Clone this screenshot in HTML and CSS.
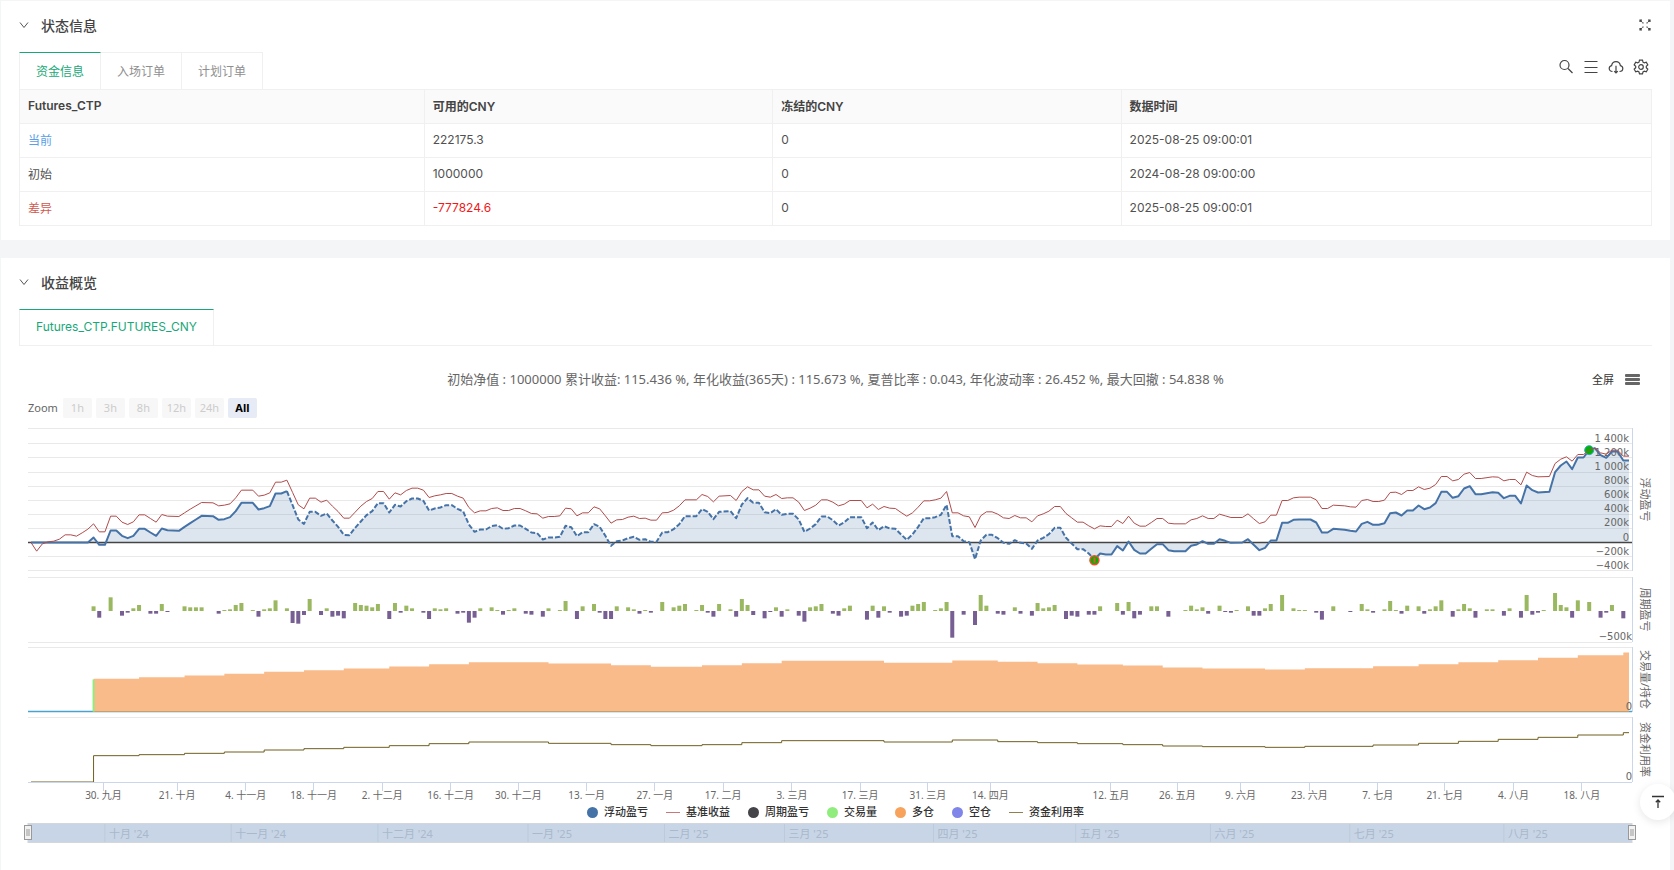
FILE: index.html
```html
<!DOCTYPE html>
<html lang="zh-CN">
<head>
    <meta charset="UTF-8">
    <meta name="viewport" content="width=device-width, initial-scale=1.0">
    <title>回测结果</title>
    <link rel="stylesheet" href="styles.css">
</head>
<body>
    <section class="panel">
        <header class="panel-header">
            <svg class="chevron" viewBox="0 0 10 10"><path d="M1 2.5 5 7.5 9 2.5"/></svg>
            <h2>状态信息</h2>
            <button class="icon-button expand" aria-label="展开">
                <svg viewBox="0 0 12 12"><path d="M1 3V1h2M1 1l1.800 1.800M3.400 3.400l1 1M9 1h2v2M11 1 9.200 2.800M8.600 3.400l-1 1M1 9v2h2M1 11l1.800-1.800M3.400 8.600l1-1M11 9v2H9M11 11 9.200 9.200M8.600 8.600l-1-1"/></svg>
            </button>
        </header>

        <div class="tab-bar">
            <button class="tab active">资金信息</button>
            <button class="tab">入场订单</button>
            <button class="tab">计划订单</button>
            <div class="tools">
                <button class="icon-button" aria-label="搜索">
                    <svg viewBox="0 0 16 16"><circle cx="6.500" cy="6" r="4.500"/><path d="M10 9.500l4.500 4.500"/></svg>
                </button>
                <button class="icon-button" aria-label="列表">
                    <svg viewBox="0 0 16 16"><path d="M1.500 2.500h13M1.500 8.500h13M1.500 13.500h13"/></svg>
                </button>
                <button class="icon-button" aria-label="下载">
                    <svg viewBox="0 0 16 16"><path d="M4.500 12.500C2.500 12.500 1.200 11.200 1.200 9.600c0-1.500 1-2.600 2.400-2.900C4 4.200 5.700 2.700 8 2.700s4 1.500 4.400 4c1.400.3 2.400 1.400 2.400 2.900 0 1.600-1.300 2.900-3.300 2.900M8 6.800v7M6.200 12.200 8 14l1.800-1.800"/></svg>
                </button>
                <button class="icon-button" aria-label="设置">
                    <svg viewBox="0 0 16 16"><path d="M6.500 1.200h3l.5 2 1.300.7 2-.6 1.500 2.600-1.500 1.400v1.500l1.500 1.400-1.500 2.600-2-.6-1.300.7-.5 2h-3l-.5-2-1.300-.7-2 .6-1.500-2.600 1.500-1.400V7.300L1.200 5.900l1.500-2.600 2 .6L6 3.200z"/><circle cx="8" cy="8" r="2.300"/></svg>
                </button>
            </div>
        </div>

        <table class="funds">
            <colgroup><col class="col-name"><col class="col-money"><col class="col-money"><col></colgroup>
            <thead>
                <tr><th>Futures_CTP</th><th>可用的CNY</th><th>冻结的CNY</th><th>数据时间</th></tr>
            </thead>
            <tbody>
                <tr><td class="blue">当前</td><td>222175.3</td><td>0</td><td>2025-08-25 09:00:01</td></tr>
                <tr><td>初始</td><td>1000000</td><td>0</td><td>2024-08-28 09:00:00</td></tr>
                <tr><td class="brick">差异</td><td class="red">-777824.6</td><td>0</td><td>2025-08-25 09:00:01</td></tr>
            </tbody>
        </table>
    </section>

    <section class="panel panel-chart">
        <header class="panel-header">
            <svg class="chevron" viewBox="0 0 10 10"><path d="M1 2.500 5 7.500 9 2.500"/></svg>
            <h2>收益概览</h2>
        </header>

        <div class="tab-bar lined">
            <button class="tab active">Futures_CTP.FUTURES_CNY</button>
        </div>

        <div class="chart">
            <div class="chart-head">
                <p class="chart-title">初始净值 : 1000000 累计收益: 115.436 %, 年化收益(365天) : 115.673 %, 夏普比率 : 0.043, 年化波动率 : 26.452 %, 最大回撤 : 54.838 %</p>
                <div class="chart-actions">
                    <button class="fullscreen">全屏</button>
                    <button class="burger" aria-label="菜单"><i></i><i></i><i></i></button>
                </div>
            </div>

            <div class="range">
                <span>Zoom</span>
                <button disabled>1h</button>
                <button disabled>3h</button>
                <button disabled>8h</button>
                <button disabled>12h</button>
                <button disabled>24h</button>
                <button class="current">All</button>
            </div>

            <svg id="plots" class="plots"></svg>

            <div class="legend">
                <button><i class="dot dot-blue"></i>浮动盈亏</button>
                <button><i class="dash dash-red"></i>基准收益</button>
                <button><i class="dot dot-dark"></i>周期盈亏</button>
                <button><i class="dot dot-green"></i>交易量</button>
                <button><i class="dot dot-orange"></i>多仓</button>
                <button><i class="dot dot-violet"></i>空仓</button>
                <button><i class="dash dash-olive"></i>资金利用率</button>
            </div>

            <svg id="navigator" class="navigator"></svg>
        </div>
    </section>

    <button class="to-top" aria-label="回到顶部">
        <svg viewBox="0 0 14 14"><path d="M1 1.500h12M7 13V5M4.800 7.200 7 5l2.200 2.200"/></svg>
    </button>

    <script src="chart.js"></script>
</body>
</html>
```

FILE: styles.css
```css
* {
    box-sizing: border-box;
}

body {
    margin: 0;
    padding: 1px 4px 0 1px;
    min-height: 100vh;
    display: flex;
    flex-direction: column;
    background-color: #f4f5f7;
    color: #515151;
    font-family: Inter, "Noto Sans CJK SC", sans-serif;
    font-size: 12px;
}

button {
    margin: 0;
    padding: 0;
    border: none;
    background: none;
    color: inherit;
    font: inherit;
    cursor: pointer;
}

svg {
    display: block;
}

.panel {
    padding: 0 18px 14px;
    background-color: #fff;
}

.panel-chart {
    flex: 1;
    margin-top: 18px;
}

.panel-header {
    height: 51px;
    padding-bottom: 3px;
    display: flex;
    align-items: center;
}

.panel-header h2 {
    margin: 0;
    font-size: 14px;
    font-weight: 500;
    color: #444;
}

.chevron {
    width: 10px;
    height: 10px;
    margin-right: 12px;
    fill: none;
    stroke: #555;
}

.icon-button svg {
    width: 16px;
    height: 16px;
    fill: none;
    stroke: #444;
    stroke-width: 1.200;
}

.expand {
    margin-left: auto;
    margin-right: 1px;
}

.expand svg {
    width: 12px;
    height: 12px;
}

/* tabs */
.tab-bar {
    height: 37px;
    display: flex;
}

.tab-bar.lined {
    border-bottom: 1px solid #f0f0f0;
}

.tab {
    padding: 0 16px 2px;
    border-top: 1px solid #f0f0f0;
    border-right: 1px solid #f0f0f0;
    color: #8f8f8f;
}

.tab:first-child {
    border-left: 1px solid #f0f0f0;
}

.tab.active {
    border-top-color: #18a878;
    color: #18a878;
}

.tools {
    margin-left: auto;
    padding: 0 3px 7px 0;
    display: flex;
    align-items: center;
    gap: 9px;
}

/* funds table */
.funds {
    width: 100%;
    border-collapse: collapse;
    table-layout: fixed;
}

.col-name {
    width: 24.800%;
}

.col-money {
    width: 21.350%;
}

.funds th,
.funds td {
    height: 34px;
    padding: 0 8px 2px;
    border: 1px solid #f0f0f0;
    text-align: left;
}

.funds th {
    background-color: #fafafa;
    font-weight: 600;
    color: #444;
}

.funds .blue {
    color: #5a9fe8;
}

.funds .brick {
    color: #d0574e;
}

.funds .red {
    color: #f01818;
}

/* chart */
.chart {
    padding-top: 24px;
    font-family: "Noto Sans", "Noto Sans CJK SC", sans-serif;
    color: #666;
}

.chart-head {
    height: 18px;
    padding: 0 12px;
    display: grid;
    grid-template-columns: 1fr auto 1fr;
    align-items: center;
}

.chart-title {
    grid-column: 2;
    margin: 0;
    font-size: 13px;
    line-height: 18px;
    white-space: nowrap;
}

.chart-actions {
    display: flex;
    justify-content: flex-end;
    align-items: center;
    gap: 11px;
}

.fullscreen {
    font-size: 11px;
    color: #333;
}

.burger {
    width: 15px;
    display: grid;
    gap: 1px;
}

.burger i {
    height: 3px;
    border-radius: 1px;
    background-color: #666;
}

.range {
    height: 20px;
    margin: 10px 0 6px;
    padding-left: 9px;
    display: flex;
    gap: 4px;
    font-size: 11px;
    line-height: 20px;
}

.range span {
    margin-right: 1px;
}

.range button {
    width: 29px;
    border-radius: 2px;
    background-color: #f7f7f7;
    color: #ccc;
}

.range .current {
    background-color: #e6ebf5;
    color: #000;
    font-weight: 700;
}

.plots {
    width: 100%;
    height: 380px;
    overflow: visible;
    font-size: 10px;
}

.plots text {
    fill: #666;
}

.axis-value {
    font-family: "DejaVu Sans", sans-serif;
    text-anchor: end;
}

.plots .pane-title {
    font-size: 11px;
}

.pane-title,
.axis-date {
    text-anchor: middle;
}

.grid {
    stroke: #e9e9e9;
    shape-rendering: crispEdges;
}

.axis {
    stroke: #ccd6eb;
    shape-rendering: crispEdges;
}

.zero {
    stroke: #444;
    stroke-width: 1.500;
}

.area {
    fill: #4572a7;
    fill-opacity: .18;
}

.line-profit {
    fill: none;
    stroke: #4572a7;
    stroke-width: 2;
    stroke-linejoin: round;
}

.line-profit.dashed {
    stroke-dasharray: 5 2;
}

.line-base {
    fill: none;
    stroke: #b04c4c;
    stroke-width: 1;
}

.gain {
    fill: #9ab860;
}

.loss {
    fill: #775e93;
}

.volume {
    fill: #90ed7d;
}

.position {
    fill: #f9bb89;
}

.position-base {
    stroke: #c4a06e;
}

.flat {
    stroke: #4aa3cf;
    stroke-width: 1.500;
}

.line-usage {
    fill: none;
    stroke: #6f5f20;
}

.mark-low {
    fill: #00b400;
    stroke: #f05030;
    stroke-width: 1.500;
}

.mark-high {
    fill: #00b400;
    stroke: #3aa0c8;
}

.mark-bar {
    stroke: #f05030;
    stroke-width: 2;
}

.legend {
    height: 16px;
    display: flex;
    justify-content: center;
    gap: 18px;
    color: #333;
    font-size: 11px;
    font-weight: 500;
    line-height: 16px;
}

.legend button {
    display: flex;
    align-items: center;
    gap: 6px;
}

.dot {
    width: 11px;
    height: 11px;
    border-radius: 50%;
}

.dash {
    width: 14px;
    height: 1px;
}

.dot-blue { background-color: #4572a7; }
.dot-dark { background-color: #434348; }
.dot-green { background-color: #90ed7d; }
.dot-orange { background-color: #f7a35c; }
.dot-violet { background-color: #8085e9; }
.dash-red { background-color: #c87878; }
.dash-olive { background-color: #908050; }

.navigator {
    width: 100%;
    height: 20px;
    margin-top: 3px;
    overflow: visible;
    font-size: 11px;
}

.navigator text {
    fill: #a9b8ca;
}

.nav-mask {
    fill: #c8d5e6;
    stroke: #d3d6da;
}

.nav-line {
    stroke: #bccadb;
}

.handle {
    fill: #f2f2f2;
    stroke: #999;
}

.to-top {
    position: fixed;
    right: -2px;
    bottom: 50px;
    width: 36px;
    height: 36px;
    display: grid;
    place-items: center;
    border-radius: 50%;
    background-color: #fff;
    box-shadow: 0 2px 8px rgba(0, 0, 0, .1);
}

.to-top svg {
    width: 14px;
    height: 14px;
    fill: none;
    stroke: #333;
    stroke-width: 1.300;
}
```

FILE: chart.js
```js
// [day, floating profit, benchmark], one unit = 4.74k CNY
const profit = [
    [0,0,0],[1,0,-26],[2,0,-4],[3,0,2],[4,0,4],[5,0,10],[6,0,23],[7,0,23],[8,0,19],[9,0,29],
    [10,0,40],[11,15,56],[12,-7,32],[13,-7,32],[14,36,79],[15,36,79],[16,20,61],[17,13,54],[18,20,62],[19,41,83],
    [20,41,83],[21,30,72],[22,20,61],[23,42,84],[24,37,79],[26,35,78],[27,47,89],[28,58,100],[29,69,110],[30,80,120],
    [32,79,119],[33,68,110],[34,70,112],[35,76,116],[36,94,134],[37,119,157],[39,119,157],[40,99,139],[41,103,142],[42,109,149],
    [43,147,181],[44,147,181],[45,154,187],[46,112,150],[47,69,113],[48,56,101],[49,92,133],[50,92,133],[51,80,121],[52,87,127],
    [53,66,109],[54,47,93],[55,23,73],[56,22,73],[57,44,91],[58,63,109],[59,82,123],[60,94,132],[61,118,153],[62,118,153],
    [63,90,130],[64,113,149],[65,108,143],[66,124,156],[67,132,163],[68,132,163],[69,125,157],[70,96,135],[71,102,140],[72,105,143],
    [73,112,147],[74,112,147],[75,101,139],[76,93,133],[77,54,105],[78,32,89],[79,39,95],[80,39,95],[81,49,102],[82,52,104],
    [83,41,96],[84,43,96],[85,51,102],[86,51,102],[87,41,95],[88,30,87],[89,28,86],[90,9,73],[91,15,78],[92,15,78],
    [93,17,80],[94,50,103],[95,46,101],[96,19,80],[97,31,89],[98,31,89],[99,55,107],[100,47,101],[101,20,80],[102,-10,58],
    [103,4,68],[104,6,69],[105,13,76],[106,17,79],[107,8,72],[108,10,73],[109,2,67],[110,2,67],[111,30,89],[112,31,90],
    [113,40,97],[114,55,110],[115,79,128],[117,79,128],[118,100,144],[119,92,138],[120,70,122],[121,92,139],[123,94,141],[124,73,126],
    [125,114,153],[126,133,167],[127,119,158],[128,119,158],[129,91,139],[130,88,136],[131,100,144],[132,83,132],[133,86,134],[134,86,134],
    [135,69,121],[136,32,96],[137,42,103],[138,55,112],[139,78,128],[140,78,128],[141,67,121],[142,51,110],[143,60,115],[144,76,126],
    [146,76,126],[147,43,104],[148,60,115],[149,37,99],[150,49,108],[151,42,103],[152,41,102],[153,24,90],[154,8,79],[155,24,89],
    [156,47,106],[157,73,125],[158,73,125],[159,76,128],[160,83,133],[161,113,153],[162,19,89],[163,19,89],[164,4,80],[165,1,77],
    [166,-50,45],[167,6,80],[168,23,92],[169,23,92],[170,13,85],[171,-1,74],[172,-4,72],[173,7,81],[174,-1,74],[175,-3,74],
    [176,-19,62],[177,6,80],[178,14,86],[179,25,94],[180,44,108],[181,44,108],[182,14,87],[183,-3,74],[184,-20,61],[185,-20,61],
    [186,-33,50],[187,-51,41],[188,-33,50],[189,-36,48],[190,-36,48],[191,-11,67],[192,-24,57],[193,3,79],[194,-22,58],[195,-33,49],
    [196,-33,49],[197,-19,60],[198,-5,72],[199,-5,72],[200,-23,58],[201,-26,56],[203,-26,56],[204,-10,68],[205,-6,72],[206,4,80],
    [207,-4,72],[208,-4,72],[209,10,85],[210,5,80],[211,-1,75],[213,0,75],[214,10,86],[215,-7,71],[216,-23,57],[217,-16,62],
    [218,6,82],[219,6,82],[220,59,126],[221,59,126],[222,68,134],[223,69,136],[225,69,136],[226,60,128],[227,30,102],[228,30,102],
    [229,41,112],[231,38,110],[232,35,107],[233,33,106],[234,56,126],[235,62,129],[236,53,123],[237,53,123],[238,58,127],[239,88,150],
    [240,90,151],[241,81,144],[242,96,156],[243,96,156],[244,111,167],[245,100,159],[246,105,163],[247,118,174],[248,152,198],[249,152,198],
    [250,134,185],[251,139,189],[252,162,205],[253,169,210],[254,145,192],[255,145,192],[257,151,197],[258,149,196],[259,133,185],[260,140,189],
    [261,140,189],[262,117,173],[263,171,211],[264,157,201],[265,150,197],[267,152,198],[268,211,237],[269,231,250],[270,243,257],[271,220,244],
    [272,255,264],[273,255,264],[274,277,277],[275,283,283],[276,262,269],[277,254,265],[278,273,277],[279,273,277],[280,246,259],[281,246,259]
];

// [day, profit of the period]
const periods = [
    [11,14],[12,-20],[14,41],[16,-14],[17,-5],[18,8],[19,18],[21,-8],[22,-8],[23,21],[24,-3],[27,14],[28,11],[29,11],[30,11],
    [33,-8],[34,3],[35,5],[36,18],[37,24],[39,3],[40,-17],[41,5],[42,8],[43,32],[45,8],[46,-36],[47,-38],[48,-12],[49,36],
    [51,-12],[52,8],[53,-17],[54,-14],[55,-22],[57,24],[58,18],[59,16],[60,11],[61,21],[63,-24],[64,24],[65,-5],[66,16],[67,8],
    [69,-5],[70,-24],[71,8],[72,5],[73,8],[75,-8],[76,-5],[77,-35],[78,-20],[79,8],[81,11],[82,3],[83,-11],[84,3],[85,8],
    [87,-8],[88,-11],[90,-17],[91,8],[93,3],[94,30],[96,-24],[97,14],[99,21],[100,-5],[101,-24],[102,-24],[103,14],[105,11],[106,5],
    [107,-8],[108,3],[109,-5],[111,27],[113,11],[114,16],[115,21],[117,3],[118,18],[119,-5],[120,-17],[121,21],[123,5],[124,-17],[125,36],
    [126,18],[127,-12],[129,-22],[130,-3],[131,11],[132,-17],[133,5],[135,-14],[136,-32],[137,11],[138,14],[139,21],[141,-8],[142,-14],[143,8],
    [144,16],[147,-26],[148,16],[149,-20],[150,14],[151,-5],[153,-17],[154,-14],[155,16],[156,21],[157,27],[159,3],[160,8],[161,27],[162,-80],
    [164,-11],[166,-42],[167,48],[168,16],[170,-8],[171,-11],[173,11],[174,-8],[176,-14],[177,24],[178,8],[179,11],[180,18],[182,-24],[183,-14],
    [184,-17],[186,-11],[187,-11],[188,14],[191,24],[192,-11],[193,27],[194,-22],[195,-11],[197,14],[198,14],[200,-17],[203,3],[204,16],[205,5],
    [206,11],[207,-8],[209,16],[210,-3],[211,-5],[212,3],[214,14],[215,-14],[216,-14],[217,8],[218,21],[220,48],[222,8],[223,3],[224,3],
    [226,-5],[227,-26],[229,14],[232,-3],[234,21],[235,5],[236,-5],[238,5],[239,30],[240,3],[241,-8],[242,16],[244,14],[245,-8],[246,5],
    [247,14],[248,32],[250,-17],[251,5],[252,21],[253,8],[254,-20],[256,5],[257,5],[259,-14],[260,8],[262,-20],[263,48],[264,-11],[265,-5],
    [266,3],[268,54],[269,18],[270,11],[271,-20],[272,32],[274,27],[276,-20],[277,-5],[278,18],[280,-22]
];

// [first day, long position, capital usage]
const holdings = [
    [11,98,79],[19,103,82],[27,108,86],[34,113,90],[41,119,96],[48,124,100],[55,129,104],[63,135,109],[70,142,115],[77,148,120],
    [91,144,116],[102,139,112],[109,134,109],[118,139,112],[125,145,118],[132,152,124],[150,146,120],[162,153,126],[170,149,121],[177,145,118],
    [184,141,115],[192,138,112],[199,132,108],[206,129,106],[217,126,104],[224,130,107],[236,136,111],[244,142,116],[251,148,122],[258,154,128],
    [265,161,134],[272,169,141],[280,177,148]
];

const dates = [
    [12.75,'30. 九月'],[25.7,'21. 十月'],[37.75,'4. 十一月'],[49.7,'18. 十一月'],[61.75,'2. 十二月'],[73.8,'16. 十二月'],[85.7,'30. 十二月'],
    [97.7,'13. 一月'],[109.7,'27. 一月'],[121.7,'17. 二月'],[133.8,'3. 三月'],[145.8,'17. 三月'],[157.7,'31. 三月'],[168.7,'14. 四月'],
    [189.9,'12. 五月'],[201.6,'26. 五月'],[212.7,'9. 六月'],[224.8,'23. 六月'],[236.8,'7. 七月'],[248.6,'21. 七月'],[260.7,'4. 八月'],[272.7,'18. 八月']
];

const months = [
    [13,"十月 '24"],[35.2,"十一月 '24"],[61,"十二月 '24"],[87.4,"一月 '25"],[111.4,"二月 '25"],[132.5,"三月 '25"],
    [158.7,"四月 '25"],[183.7,"五月 '25"],[207.4,"六月 '25"],[231.9,"七月 '25"],[259,"八月 '25"]
];

const LAST = 281;
const LEFT = 9;
const panes = [
    { top: 4, bottom: 147, zero: 118.5, title: '浮动盈亏' },
    { top: 153, bottom: 218, zero: 187, title: '周期盈亏' },
    { top: 223, bottom: 288, zero: 287.5, title: '交易量/持仓' },
    { top: 293, bottom: 358, zero: 358, title: '资金利用率' }
];

const line = (cls, x1, y1, x2, y2) => `<line class="${cls}" x1="${x1}" y1="${y1}" x2="${x2}" y2="${y2}"/>`;
const rect = (cls, x, y, w, h) => `<rect class="${cls}" x="${x}" y="${y}" width="${w}" height="${h}"/>`;
const text = (cls, x, y, str) => `<text class="${cls}" x="${x}" y="${y}">${str}</text>`;
const path = (cls, points) => `<path class="${cls}" d="M${points.map(p => p.join(' ')).join('L')}"/>`;

function drawPlots() {
    const svg = document.getElementById('plots');
    const right = svg.clientWidth - 20;
    const x = day => LEFT + 3 + day * (right - LEFT - 6) / LAST;
    const [main, period, position, usage] = panes;
    const y = v => main.zero - v / 3;
    let out = '';

    // floating profit
    out += line('grid', LEFT, main.top + .5, right, main.top + .5);
    for (let i = -2; i <= 7; i++) {
        const gy = Math.floor(main.zero - i * 14.1) + .5;
        out += line('grid', LEFT, gy, right, gy);
    }
    const blue = profit.map(p => [x(p[0]), y(p[1])]);
    const red = profit.map(p => [x(p[0]), y(p[2])]);
    out += path('area', [[x(0), main.zero], ...blue, [x(LAST), main.zero]]);
    out += line('zero', LEFT, main.zero, right, main.zero);
    for (let i = -2; i <= 7; i++) {
        const v = i * 200;
        const label = v >= 1000 ? '1 ' + String(v).slice(1) + 'k' : v ? String(v).replace('-', '−') + 'k' : '0';
        out += text('axis-value', right - 3, Math.round(main.zero - i * 14.1) - 2, label);
    }
    const from = profit.findIndex(p => p[0] === 45);
    const to = profit.findIndex(p => p[0] === 187);
    out += path('line-profit', blue.slice(0, from + 1));
    out += path('line-profit dashed', blue.slice(from, to + 1));
    out += path('line-profit', blue.slice(to));
    out += `<circle class="mark-low" cx="${x(187)}" cy="${y(-53)}" r="4.5"/>`;
    out += line('mark-bar', x(187), y(-45), x(187), y(-61));
    out += `<circle class="mark-high" cx="${x(274)}" cy="${y(277)}" r="4.5"/>`;
    out += path('line-base', red);

    // period profit
    out += line('grid', LEFT, period.top + .5, right, period.top + .5);
    out += line('grid', LEFT, period.bottom + .5, right, period.bottom + .5);
    for (const [day, v] of periods) {
        const h = Math.abs(v) / 3;
        out += rect(v > 0 ? 'gain' : 'loss', x(day) - 2, v > 0 ? period.zero - h : period.zero, 4, h);
    }
    out += text('axis-value', right, 216, '−500k');

    // position and capital usage
    out += line('grid', LEFT, position.top + .5, right, position.top + .5);
    out += line('grid', LEFT, usage.top + .5, right, usage.top + .5);
    out += line('flat', LEFT, position.zero, right, position.zero);
    const steps = [];
    const used = [[x(0), usage.zero], [x(11), usage.zero]];
    holdings.forEach(([day, lots, share], i) => {
        const end = i + 1 < holdings.length ? holdings[i + 1][0] : LAST;
        steps.push([x(day), position.zero - lots / 3], [x(end), position.zero - lots / 3]);
        used.push([x(day), usage.zero - share / 3], [x(end), usage.zero - share / 3]);
    });
    out += path('position', [[x(11), position.zero], ...steps, [x(LAST), position.zero]]);
    out += line('position-base', x(11), position.zero, x(LAST), position.zero);
    out += rect('volume', x(11) - 1, position.zero - 32, 2, 32);
    out += text('axis-value', right, 286, '0');
    out += path('line-usage', used);
    out += text('axis-value', right, 356, '0');

    // axes
    out += line('axis', LEFT, usage.bottom + .5, right, usage.bottom + .5);
    for (const pane of panes) {
        out += line('axis', right + .5, pane.top, right + .5, pane.bottom);
        const mid = (pane.top + pane.bottom) / 2;
        out += `<text class="pane-title" transform="translate(${right + 9} ${mid}) rotate(90)">${pane.title}</text>`;
    }
    for (const [day, label] of dates) {
        out += line('axis', x(day), usage.bottom, x(day), usage.bottom + 9);
        out += text('axis-date', x(day), 375, label);
    }
    svg.innerHTML = out;
}

function drawNavigator() {
    const svg = document.getElementById('navigator');
    const right = svg.clientWidth - 20;
    const x = day => LEFT + 3 + day * (right - LEFT - 6) / LAST;
    let out = rect('nav-mask', LEFT, .5, right - LEFT, 19);
    for (const [day, label] of months) {
        out += line('nav-line', x(day), 1, x(day), 19);
        out += text('', x(day) + 4, 15, label);
    }
    for (const hx of [LEFT, right]) {
        out += rect('handle', hx - 3.5, 2.5, 7, 14);
        out += line('handle', hx - 1, 6, hx - 1, 13) + line('handle', hx + 1, 6, hx + 1, 13);
    }
    svg.innerHTML = out;
}

function draw() {
    drawPlots();
    drawNavigator();
}

draw();
window.addEventListener('resize', draw);
```
